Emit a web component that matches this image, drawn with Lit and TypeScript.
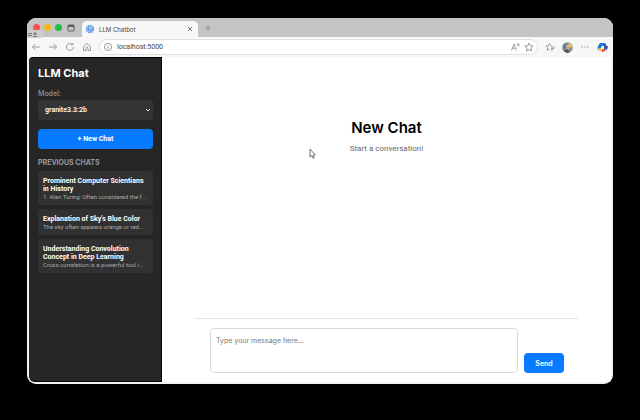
import { LitElement, html, css, svg } from "lit";
import { customElement, property } from "lit/decorators.js";

interface Chat {
  title: string;
  preview: string;
}

const chats: Chat[] = [
  { title: "Prominent Computer Scientians in History", preview: "1. Alan Turing: Often considered the f..." },
  { title: "Explanation of Sky's Blue Color", preview: "The sky often appears orange or red..." },
  { title: "Understanding Convolution Concept in Deep Learning", preview: "Cross-correlation is a powerful tool i..." },
];

const star = svg`<path d="M5 1 6.200 3.700 9.200 4 7 6 7.600 9 5 7.500 2.400 9 3 6 .8 4 3.800 3.700Z"/>`;

@customElement("browser-bar")
class BrowserBar extends LitElement {
  static styles = css`
    :host { display: block; position: relative; font-family: Inter, "Liberation Sans", sans-serif; color: #444; }
    button { border: 0; padding: 0; background: none; color: inherit; display: flex; }
    svg { display: block; width: 10px; height: 10px; fill: none; stroke: #858585; stroke-width: 0.8; }
    .tabs { display: flex; align-items: center; height: 19px; background: #c4c4c4; padding-left: 6px; }
    .light { width: 7px; height: 7px; border-radius: 50%; margin-right: 4px; }
    .red { background: #f9524d; }
    .yellow { background: #f7b914; }
    .green { background: #1fbe41; }
    .panes { margin-right: 6px; }
    .panes svg { stroke: #444; }
    .tab { display: flex; align-items: center; align-self: flex-end; box-sizing: border-box; width: 116px; height: 16px; padding: 0 3px; gap: 4px; background: #f7f7f7; border-radius: 5px 5px 0 0; font-size: 6px; }
    .tab span { flex: 1; }
    .plus { margin-left: 5px; }
    .tools { display: flex; align-items: center; height: 20px; padding: 0 5px 0 4px; background: #f7f7f7; }
    .tools > button { margin-right: 7px; }
    .address { flex: 1; display: flex; align-items: center; box-sizing: border-box; height: 16px; padding: 0 3px; margin-right: 7px; gap: 4px; background: #fff; border: 1px solid #e0e0e0; border-radius: 8px; }
    .address input { flex: 1; min-width: 0; border: 0; padding: 0; background: none; outline: none; font: 7px Roboto, sans-serif; color: #444; }
    .tools > .profile svg, .tools > .copilot svg { width: 11px; height: 11px; stroke: none; }
    .tools > .copilot { margin-right: 0; }
    .hint { position: absolute; left: 0; top: 12px; width: 17px; height: 8px; border-radius: 0 4px 4px 0; background: #cfcfcf; opacity: 0.9; }
    .hint svg { width: 17px; height: 8px; stroke: #555; }
  `;
  render() {
    return html`
      <div class="tabs">
        <span class="light red"></span><span class="light yellow"></span><span class="light green"></span>
        <button class="panes" aria-label="Tab actions"><svg viewBox="0 0 10 10"><rect x="2" y="2" width="6" height="6" rx="1"/><path d="M2 3H8" stroke-width="1.6"/></svg></button>
        <div class="tab">
          <svg viewBox="0 0 10 10"><circle cx="5" cy="5" r="3.400" fill="#b5d2f7" stroke="#5c9bec" stroke-width="1.600" stroke-dasharray="2 .6"/><path d="M5 3.500A1.500 1.500 0 1 0 6.500 5H9" stroke="#4d90e8" stroke-width="1.200"/></svg>
          <span>LLM Chatbot</span>
          <button aria-label="Close tab"><svg viewBox="0 0 10 10"><path d="M3 3 7 7M7 3 3 7" stroke="#555"/></svg></button>
        </div>
        <button class="plus" aria-label="New tab"><svg viewBox="0 0 10 10"><path d="M5 2V8M2 5H8"/></svg></button>
      </div>
      <div class="tools">
        <button aria-label="Back"><svg viewBox="0 0 10 10"><path d="M9 5H1.500M4.500 2 1.500 5 4.500 8"/></svg></button>
        <button aria-label="Forward"><svg viewBox="0 0 10 10"><path d="M1 5H8.500M5.500 2 8.500 5 5.500 8"/></svg></button>
        <button aria-label="Reload"><svg viewBox="0 0 10 10"><path d="M8.500 5A3.500 3.500 0 1 1 7.200 2.200M5.800 2.800H8V.8"/></svg></button>
        <button aria-label="Home"><svg viewBox="0 0 10 10"><path d="M1.500 4.500 5 1.500 8.500 4.500V8.500H6V6A1 1 0 0 0 4 6V8.500H1.500Z"/></svg></button>
        <div class="address">
          <svg viewBox="0 0 10 10"><circle cx="5" cy="5" r="3.600"/><path d="M5 4.500V7M5 3V3.600"/></svg>
          <input aria-label="Address" .value=${"localhost:5000"} />
          <button aria-label="Read aloud"><svg viewBox="0 0 10 10"><path d="M1.500 8.500 4 2 6.500 8.500M2.400 6.200H5.600M7 1.500Q8 2.500 7.500 4M8.300 1Q9.500 2.500 8.800 4.500"/></svg></button>
          <button aria-label="Favorite"><svg viewBox="0 0 10 10">${star}</svg></button>
        </div>
        <button aria-label="Favorites list"><svg viewBox="0 0 10 10"><path d="M6.500 4 5.500 3.600 4.500 1.500 3.300 3.600 1 4 2.700 5.700 2.300 8.300 4.500 7.200M6 5H9.500M6 6.500H9M6 8H8"/></svg></button>
        <button class="profile" aria-label="Profile"><svg viewBox="0 0 11 11"><circle cx="5.500" cy="5.500" r="5.300" fill="#8b9286"/><path d="M1 3 4 0.500 5 5 1 8Z" fill="#5b7fa5"/><path d="M7 1 10.500 4 9 6 6 4Z" fill="#dfcc57"/><path d="M4 3 7 3 7 7 5 8Z" fill="#dba89c"/><path d="M2 9 5 7 8 10 5 11Z" fill="#4d5653"/></svg></button>
        <button aria-label="Settings and more"><svg viewBox="0 0 10 10"><path d="M1.500 5H2.700M4.500 5H5.700M7.500 5H8.700" stroke-width="1.200"/></svg></button>
        <button class="copilot" aria-label="Copilot"><svg viewBox="0 0 11 11"><path d="M3 1H7L8 4H5L3 8H1Q0 6 1 4Z" fill="#1b83d2"/><path d="M7 1Q9 1 9.500 4H11Q11 7 9 8L7 7Z" fill="#3457b5"/><path d="M1 6H4L5 9Q3 10 2 8Z" fill="#f4bd36"/><path d="M5 7H9Q8 10 5 10Z" fill="#e84e45"/><path d="M5 4H7L6 7H4Z" fill="#fff"/></svg></button>
      </div>
      <div class="hint"><svg viewBox="0 0 17 8"><path d="M1 3.500H5M1 5.500H5M6 6.500H10M7 4.500H9V3H7Z"/></svg></div>
    `;
  }
}

@customElement("chat-sidebar")
class ChatSidebar extends LitElement {
  @property({ attribute: false }) chats: Chat[] = [];
  static styles = css`
    :host { display: block; box-sizing: border-box; padding: 8px 8px 9px 9px; background: #262626; border: 1px solid #050505; border-left: 0; border-radius: 4px 0 0 6px; color: #fff; font-family: Inter, "Liberation Sans", sans-serif; font-size: 7px; }
    h1 { margin: 0 0 9px; font-size: 11px; line-height: 14px; font-weight: 700; }
    label { display: block; margin-bottom: 1px; line-height: 10px; color: #999; font-weight: 500; }
    .picker { position: relative; }
    select { display: block; appearance: none; width: 100%; height: 20px; padding: 0 7px; border: 0; border-radius: 3px; background: #333436; color: #fff; font: 600 7px Roboto, sans-serif; }
    .picker svg { position: absolute; right: 2px; top: 7px; width: 6px; height: 6px; fill: none; stroke: #ddd; pointer-events: none; }
    .new { display: block; width: 100%; height: 20px; margin: 9px 0; padding: 0; border: 0; border-radius: 4px; background: #077bff; color: #fff; font: 700 7px Roboto, sans-serif; }
    h2 { margin: 0 0 3px; font-size: 7px; line-height: 10px; font-weight: 700; color: #999; text-transform: uppercase; }
    ul { list-style: none; margin: 0; padding: 0; display: flex; flex-direction: column; gap: 4px; }
    a { display: block; padding: 6px 5px 4px; border-radius: 3px; background: #313131; color: inherit; text-decoration: none; font-family: Roboto, "Liberation Sans", sans-serif; }
    .title { display: block; font-weight: 700; line-height: 8px; }
    .preview { display: block; font-size: 6px; line-height: 8px; color: #aaa; white-space: nowrap; }
  `;
  render() {
    return html`
      <h1>LLM Chat</h1>
      <label for="model">Model:</label>
      <div class="picker">
        <select id="model"><option>granite3.3:2b</option></select>
        <svg viewBox="0 0 6 6"><path d="M1 2 3 4 5 2"/></svg>
      </div>
      <button class="new">+ New Chat</button>
      <h2>Previous Chats</h2>
      <ul>
        ${this.chats.map((c) => html`<li><a href="#"><span class="title">${c.title}</span><span class="preview">${c.preview}</span></a></li>`)}
      </ul>
    `;
  }
}

@customElement("chat-panel")
class ChatPanel extends LitElement {
  static styles = css`
    :host { display: flex; justify-content: center; background: #fff; font-family: Inter, "Liberation Sans", sans-serif; }
    .column { display: flex; flex-direction: column; width: 100%; max-width: 383px; margin: 0 32px; }
    .empty { flex: 1; padding-top: 62px; text-align: center; }
    h2 { margin: 0; font-size: 15px; line-height: 18px; font-weight: 600; color: #000; }
    p { margin: 7px 0 0; font-size: 8px; line-height: 10px; color: #666; font-family: Roboto, sans-serif; }
    form { display: flex; align-items: flex-end; gap: 6px; padding: 9px 14px 9px 15px; border-top: 1px solid #e2e2e2; }
    textarea { flex: 1; min-width: 0; box-sizing: border-box; height: 45px; margin: 0; padding: 6px 5px; border: 1px solid #dadada; border-radius: 4px; resize: none; font: 7px/12px Inter, sans-serif; }
    textarea::placeholder { color: #777; }
    button { width: 40px; height: 20px; padding: 0; border: 0; border-radius: 4px; background: #077bff; color: #fff; font: 600 7px Inter, sans-serif; }
  `;
  render() {
    return html`
      <div class="column">
        <div class="empty"><h2>New Chat</h2><p>Start a conversation!</p></div>
        <form @submit=${(e: Event) => e.preventDefault()}>
          <textarea aria-label="Message" placeholder="Type your message here..."></textarea>
          <button>Send</button>
        </form>
      </div>
    `;
  }
}

@customElement("app-root")
class AppRoot extends LitElement {
  static styles = css`
    :host { display: flex; box-sizing: border-box; min-height: 100vh; padding: 18px 27px 36px 27px; background: #000; position: relative; }
    .window { flex: 1; min-width: 0; display: flex; flex-direction: column; overflow: hidden; border-radius: 9px; background: #f2f2f2; }
    .page { flex: 1; display: grid; grid-template-columns: 133px 1fr; padding: 0 2px 2px; }
    .pointer { position: absolute; left: 309px; top: 148px; width: 7px; height: 11px; fill: #fff; stroke: #555; stroke-width: 0.8; }
  `;
  render() {
    return html`
      <div class="window">
        <browser-bar></browser-bar>
        <div class="page">
          <chat-sidebar .chats=${chats}></chat-sidebar>
          <chat-panel></chat-panel>
        </div>
      </div>
      <svg class="pointer" viewBox="0 0 7 11"><path d="M1 1V9L2.800 7.400 4 10.300 5.300 9.700 4.100 7H6.300Z"/></svg>
    `;
  }
}
